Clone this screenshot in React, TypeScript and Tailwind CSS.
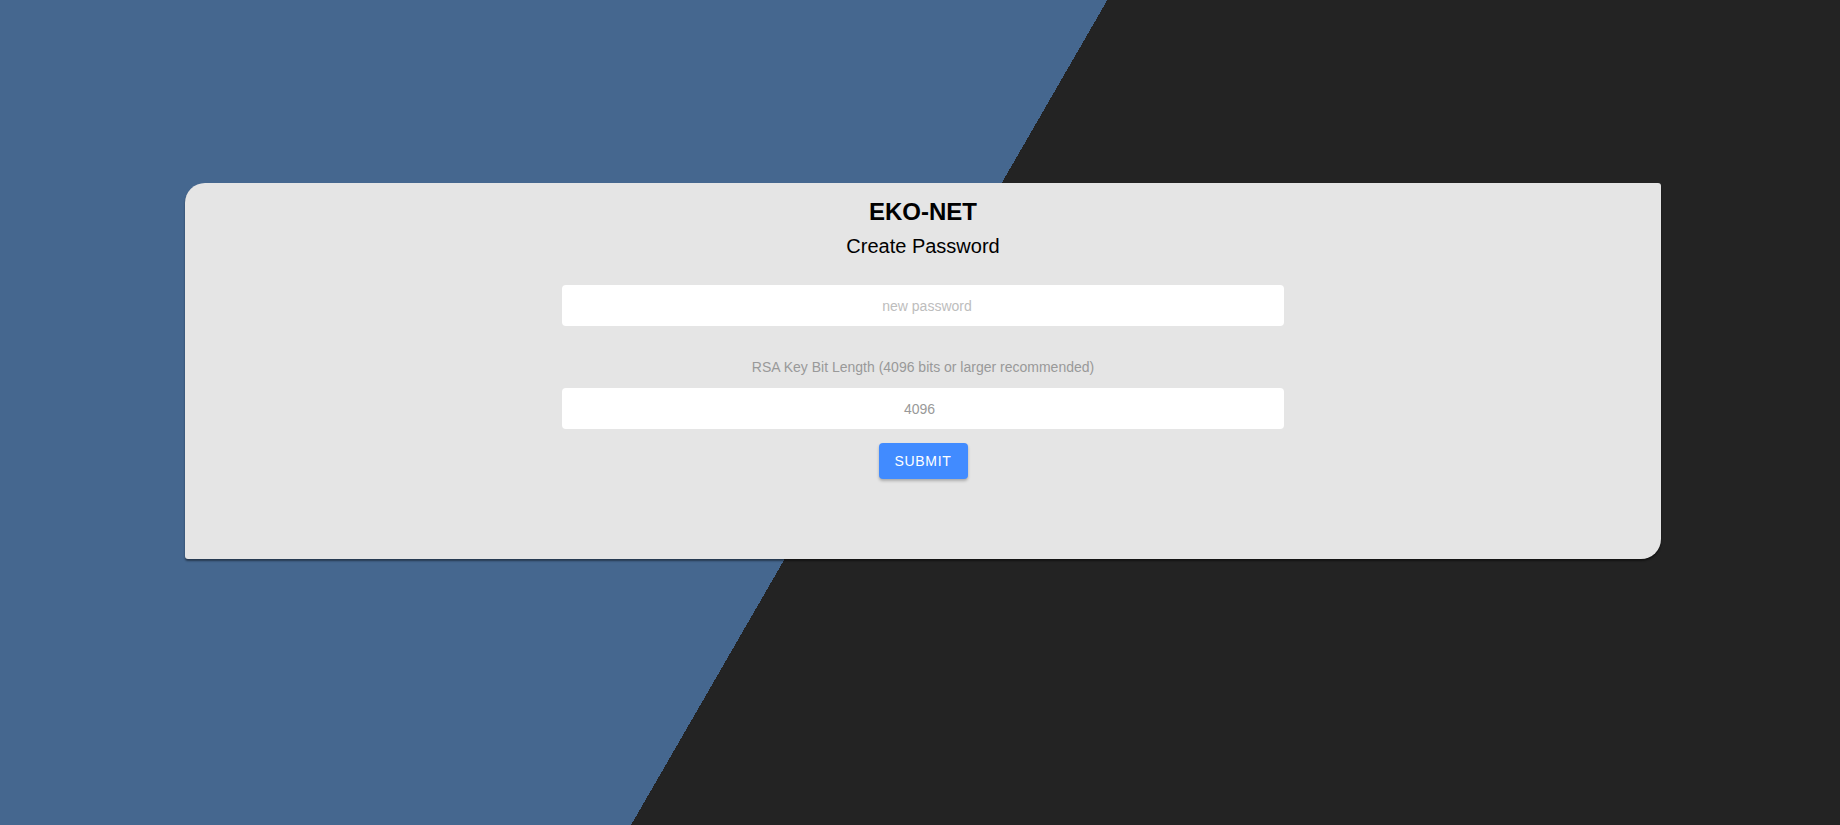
export default function App() {
  return (
    <div
      className="h-[825px] w-full overflow-hidden pt-[183px] bg-[linear-gradient(120deg,#45678f_959px,#232323_959px)]"
      style={{ fontFamily: '"Liberation Sans", Arial, sans-serif' }}
    >
      <div className="ml-[185px] h-[376px] w-[1476px] rounded-tl-[20px] rounded-br-[20px] rounded-tr-[3px] rounded-bl-[3px] bg-[#e5e5e5] shadow-[0_2px_2px_rgba(0,0,0,0.45)] pt-[15px] flex flex-col items-center">
        <h1 className="text-[24px] leading-[28px] font-bold text-black">EKO-NET</h1>
        <h2 className="mt-[9px] text-[20px] leading-[23px] text-black">Create Password</h2>

        <input
          type="password"
          placeholder="new password"
          className="mt-[27px] h-[41px] w-[722px] rounded-[4px] bg-white pl-[8px] text-center text-[14px] text-[#999] placeholder:text-[#bdbdbd] outline-none"
        />

        <label className="mt-[33px] text-[14px] leading-[16px] text-[#999]">
          RSA Key Bit Length (4096 bits or larger recommended)
        </label>

        <input
          type="text"
          defaultValue="4096"
          className="mt-[13px] h-[41px] w-[722px] rounded-[4px] bg-white pr-[7px] text-center text-[14px] text-[#999] outline-none"
        />

        <button className="mt-[14px] h-[36px] w-[89px] rounded-[4px] bg-[#418bff] text-[14px] tracking-[0.7px] text-white uppercase shadow-[0_2px_3px_rgba(0,0,0,0.25)]">
          Submit
        </button>
      </div>
    </div>
  );
}
